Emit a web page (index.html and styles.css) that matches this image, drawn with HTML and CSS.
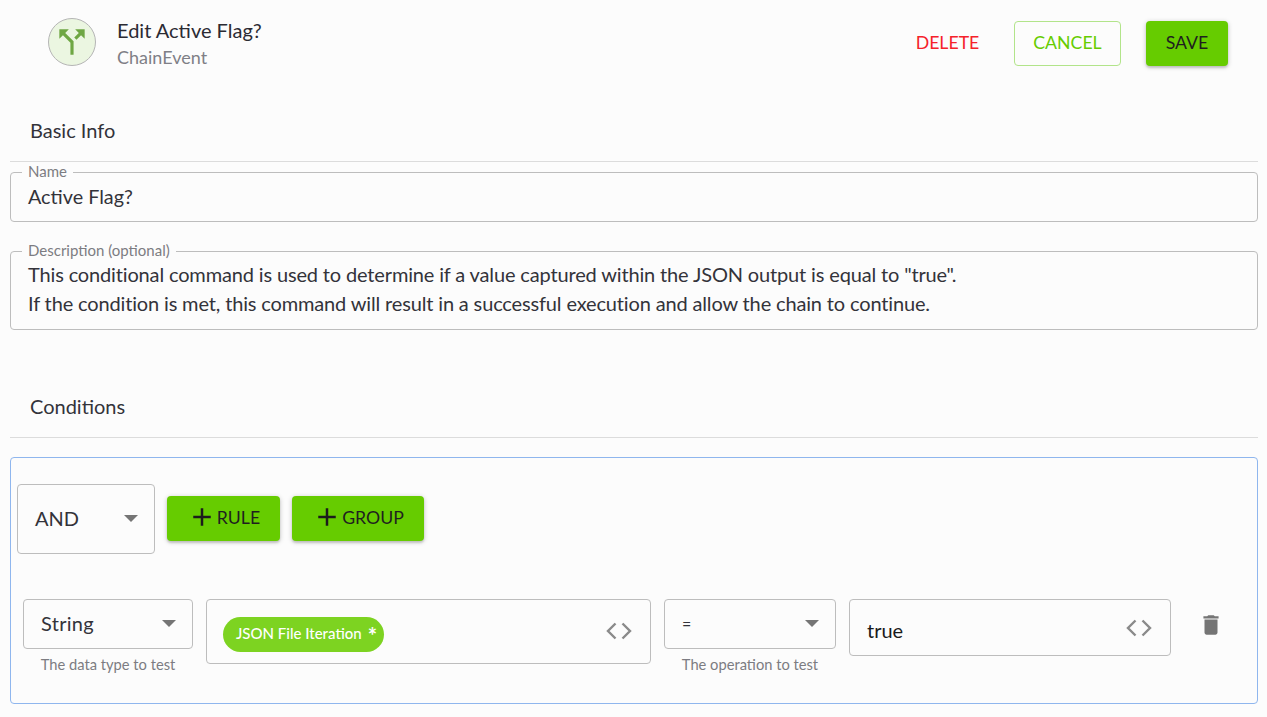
FILE: index.html
```
<!DOCTYPE html>
<html lang="en">
<head>
<meta charset="utf-8">
<title>Edit Active Flag?</title>
<link rel="stylesheet" href="styles.css">
</head>
<body>
<header class="topbar">
  <div class="avatar">
    <svg width="38" height="38" viewBox="0 0 24 24"><path fill="#6fa744" d="M14 4l2.29 2.29-2.88 2.88 1.42 1.42 2.88-2.88L20 10V4zm-4 0H4v6l2.29-2.29 4.71 4.7V20h2v-8.41l-5.29-5.3z"/></svg>
  </div>
  <div class="heading">
    <div class="heading-title">Edit Active Flag?</div>
    <div class="heading-sub">ChainEvent</div>
  </div>
  <div class="actions">
    <button class="btn btn-text">DELETE</button>
    <button class="btn btn-outline">CANCEL</button>
    <button class="btn btn-solid btn-save">SAVE</button>
  </div>
</header>

<section class="basic">
  <h2 class="section-title">Basic Info</h2>
  <fieldset class="field field-name">
    <legend>Name</legend>
    <div class="field-value">Active Flag?</div>
  </fieldset>
  <fieldset class="field field-desc">
    <legend>Description (optional)</legend>
    <div class="field-value">This conditional command is used to determine if a value captured within the JSON output is equal to "true".<br>If the condition is met, this command will result in a successful execution and allow the chain to continue.</div>
  </fieldset>
</section>

<section class="conditions">
  <h2 class="section-title">Conditions</h2>
  <div class="group">
    <div class="group-head">
      <div class="select select-and"><span>AND</span><i class="caret"></i></div>
      <button class="btn btn-solid btn-add"><svg width="30" height="30" viewBox="0 0 24 24"><path fill="#1c1c1c" d="M19 13h-6v6h-2v-6H5v-2h6V5h2v6h6z"/></svg>RULE</button>
      <button class="btn btn-solid btn-add btn-group"><svg width="30" height="30" viewBox="0 0 24 24"><path fill="#1c1c1c" d="M19 13h-6v6h-2v-6H5v-2h6V5h2v6h6z"/></svg>GROUP</button>
    </div>
    <div class="rule">
      <div class="col col-type">
        <div class="select select-rule"><span>String</span><i class="caret"></i></div>
        <div class="hint">The data type to test</div>
      </div>
      <div class="input input-chip">
        <span class="chip">JSON File Iteration<b class="star">*</b></span>
        <svg class="code" width="28" height="28" viewBox="0 0 28 28"><path fill="none" stroke="#8a8a8a" stroke-width="2.4" d="M10.5 6.5L3 14l7.500 7.500M17.500 6.500L25 14l-7.500 7.500"/></svg>
      </div>
      <div class="col col-op">
        <div class="select select-rule select-op"><span>=</span><i class="caret"></i></div>
        <div class="hint">The operation to test</div>
      </div>
      <div class="input input-value">
        <span class="value">true</span>
        <svg class="code" width="28" height="28" viewBox="0 0 28 28"><path fill="none" stroke="#8a8a8a" stroke-width="2.4" d="M10.5 6.5L3 14l7.500 7.500M17.500 6.500L25 14l-7.500 7.500"/></svg>
      </div>
      <svg class="trash" width="26" height="26" viewBox="0 0 24 24"><path fill="#757575" d="M6 19c0 1.1.9 2 2 2h8c1.1 0 2-.9 2-2V7H6v12zM19 4h-3.5l-1-1h-5l-1 1H5v2h14V4z"/></svg>
    </div>
  </div>
</section>
</body>
</html>
```
FILE: styles.css
```
* { box-sizing: border-box; }
html, body { margin: 0; padding: 0; }
body {
  width: 1267px;
  height: 717px;
  overflow: hidden;
  background: #fcfcfc;
  font-family: Lato, "Liberation Sans", sans-serif;
  color: #333;
  padding: 0 9px 0 10px;
}
.topbar {
  display: flex;
  align-items: flex-start;
  height: 100px;
  padding: 18px 30px 0 38px;
}
.avatar {
  width: 48px;
  height: 48px;
  border-radius: 50%;
  border: 1.5px solid #b5b5b5;
  background: #ebf6e1;
  display: flex;
  align-items: center;
  justify-content: center;
  flex: none;
}
.heading { margin-left: 21px; margin-top: -1px; }
.heading-title { font-size: 20px; line-height: 26px; color: #2b2b33; }
.heading-sub { font-size: 18px; line-height: 24px; margin-top: 2px; color: #7f7f86; }
.actions { margin-left: auto; margin-top: 3px; display: flex; align-items: center; }
.btn {
  font-family: inherit;
  font-size: 17.7px;
  border-radius: 4px;
  border: 0;
  background: none;
  height: 45px;
  padding: 0 0 3px;
  display: inline-flex;
  align-items: center;
  justify-content: center;
}
.btn-text { color: #f5222a; width: 63px; }
.btn-outline {
  color: #66cc00;
  border: 1px solid #b2e48a;
  width: 107px;
  margin-left: 35px;
}
.btn-solid {
  background: #66cc00;
  color: #1f1f1f;
  box-shadow: 0 1px 5px rgba(0,0,0,.22), 0 2px 2px rgba(0,0,0,.12);
}
.btn-save { width: 82px; margin-left: 25px; }
.section-title {
  margin: 0;
  font-weight: 400;
  font-size: 20px;
  line-height: 26px;
  color: #33333a;
  padding: 0 0 18px 20px;
  border-bottom: 1px solid #dcdcdc;
}
.basic { height: 290px; padding-top: 17px; }
.field {
  margin: 0;
  padding: 0 17px;
  border: 1px solid #bdbdbd;
  border-radius: 4px;
  min-width: 0;
}
.field legend {
  font-size: 15px;
  line-height: 18px;
  padding: 0 6px 2px;
  margin-left: -6px;
  color: #7c7c82;
}
.field-name { height: 60px; margin-top: 0; padding-top: 0; }
.field-desc { height: 89px; margin-top: 19px; }
.field-value { font-size: 19.8px; line-height: 29px; color: #33333a; white-space: nowrap; }
.field-desc .field-value { letter-spacing: -.15px; font-size: 20px; margin-top: -1px; }
.conditions .section-title { padding-top: 3px; }
.group {
  margin-top: 19px;
  height: 247px;
  border: 1px solid #8fb6ee;
  border-radius: 4px;
  padding: 26px 6px 0 6px;
}
.group-head { display: flex; align-items: center; }
.select {
  border: 1px solid #bdbdbd;
  border-radius: 4px;
  display: flex;
  align-items: center;
  justify-content: space-between;
  font-size: 20px;
  color: #33333a;
}
.select-and { width: 138px; height: 70px; padding: 0 16px 2px 17px; }
.caret {
  width: 0;
  height: 0;
  border-left: 7px solid transparent;
  border-right: 7px solid transparent;
  border-top: 7px solid #757575;
}
.btn-add {
  width: 113px;
  height: 45px;
  margin-left: 12px;
  margin-top: -1px;
}
.btn-group { width: 132px; }
.rule { display: flex; align-items: flex-start; margin-top: 45px; padding-left: 6px; }
.col { display: flex; flex-direction: column; flex: none; }
.col-type { width: 170px; }
.col-op { width: 172px; margin-left: 13px; }
.select-rule { height: 50px; padding: 0 16px 2px 17px; }
.col-type .select span { letter-spacing: .3px; }
.select-op { font-size: 16px; }
.hint { font-size: 14.7px; line-height: 18px; margin-top: 6px; text-align: center; color: #7c7c82; }
.input {
  border: 1px solid #bdbdbd;
  border-radius: 4px;
  display: flex;
  align-items: center;
  justify-content: space-between;
  flex: none;
}
.input-chip { width: 445px; height: 65px; margin-left: 13px; padding: 0 17px 0 16px; }
.input-value { width: 322px; height: 57px; margin-left: 13px; padding: 0 17px 0 17px; }
.input-chip .code { margin-bottom: 2px; }
.chip {
  background: #7dd321;
  color: #fff;
  border-radius: 18px;
  height: 35px;
  width: 161px;
  margin-top: 5px;
  display: flex;
  align-items: center;
  padding: 0 0 2px 13px;
  font-size: 15px;
  font-weight: 500;
}
.star { font-weight: 700; font-size: 22px; margin-left: 6px; margin-top: 4px; }
.value { font-size: 20px; color: #1a1a1a; margin-top: 4px; }
.trash { margin-left: 27px; margin-top: 13px; flex: none; }
```
